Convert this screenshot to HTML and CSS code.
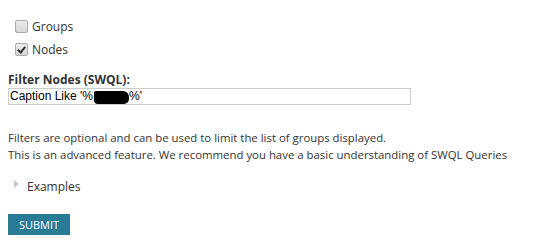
FILE: index.html
```html
<!DOCTYPE html>
<html lang="en">
<head>
  <meta charset="UTF-8">
  <title>Filter</title>
  <link rel="stylesheet" href="styles.css">
</head>
<body>
  <div class="options">
    <label class="check"><input type="checkbox"> Groups</label>
    <label class="check"><input type="checkbox" checked> Nodes</label>
  </div>

  <div class="filter">
    <div class="filter-title">Filter Nodes (SWQL):</div>
    <div class="filter-box">Caption Like '%<span class="redact"></span>%'</div>
  </div>

  <p class="note">
    Filters are optional and can be used to limit the list of groups displayed.<br>
    This is an advanced feature. We recommend you have a basic understanding of SWQL Queries
  </p>

  <div class="examples"><span class="arrow"></span>Examples</div>

  <button class="submit">SUBMIT</button>
</body>
</html>
```

FILE: styles.css
```css
body {
  font-family: "Open Sans", sans-serif;
  font-size: 12px;
  color: #333;
  background: white;
  margin: 8px;
}

.options {
  padding: 10px 0 0 7px;
  display: flex;
  flex-direction: column;
  gap: 6px;
}

.check {
  display: flex;
  align-items: center;
  gap: 4px;
  font-size: 12px;
  color: #333;
  height: 17px;
}

.check input {
  appearance: none;
  margin: 0;
  width: 13px;
  height: 13px;
  border: 1px solid #aaa;
  border-radius: 2px;
  background: linear-gradient(#eee, #d6d6d6);
  position: relative;
}

.check input:checked::after {
  content: "";
  position: absolute;
  left: 3px;
  top: 1px;
  width: 3px;
  height: 6px;
  border: solid #333;
  border-width: 0 2px 2px 0;
  transform: rotate(40deg);
}

.filter {
  margin-top: 14px;
}

.filter-title {
  font-weight: bold;
  font-size: 12px;
  line-height: 16px;
}

.filter-box {
  width: 400px;
  height: 15px;
  border: 1px solid #ccc;
  font-family: "Liberation Sans", Arial, sans-serif;
  font-size: 12px;
  line-height: 15px;
  color: #000;
  padding-left: 1px;
  display: flex;
  align-items: center;
}

.redact {
  display: inline-block;
  width: 35px;
  height: 13px;
  margin: 1px 0 0 1px;
  background: #000;
  border-radius: 2px 6px 5px 4px;
}

.note {
  margin: 24px 0 0 0;
  font-size: 11.4px;
  line-height: 17px;
}

.examples {
  margin-top: 14px;
  padding-left: 6px;
  display: flex;
  align-items: center;
  gap: 8px;
  font-size: 12px;
  height: 18px;
}

.arrow {
  width: 0;
  height: 0;
  border-left: 5px solid #c8c8c8;
  border-top: 4px solid transparent;
  border-bottom: 4px solid transparent;
  margin-top: -5px;
}

.submit {
  margin-top: 19px;
  background: #297a95;
  color: white;
  border: none;
  font-family: "Open Sans", sans-serif;
  font-size: 11px;
  width: 62px;
  height: 21px;
  padding: 0;
  border-radius: 0;
}
```
